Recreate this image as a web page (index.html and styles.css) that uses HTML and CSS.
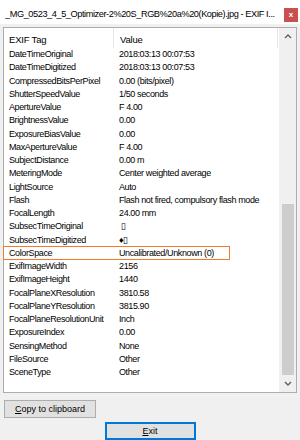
FILE: index.html
```html
<!DOCTYPE html>
<html lang="en">
<head>
    <meta charset="UTF-8">
    <title>EXIF Info</title>
    <link rel="stylesheet" href="styles.css">
</head>
<body>
    <!-- Window title -->
    <div class="titlebar">
        <span class="title">_MG_0523_4_5_Optimizer-2%20S_RGB%20a%20(Kopie).jpg - EXIF I...</span>
        <span class="close">x</span>
    </div>

    <!-- Tag list -->
    <div class="listbox">
        <div class="list">
            <div class="header">
                <div class="col-tag">EXIF Tag</div>
                <div class="col-value">Value</div>
            </div>
            <div class="rows" id="rows"></div>
        </div>
        <div class="scrollbar">
            <div class="arrow">
                <svg width="8" height="5" viewBox="0 0 8 5"><path d="M1 4 L4 1 L7 4" fill="none" stroke="#606060" stroke-width="1.4"/></svg>
            </div>
            <div class="track"></div>
            <div class="thumb"></div>
            <div class="arrow">
                <svg width="8" height="5" viewBox="0 0 8 5"><path d="M1 1 L4 4 L7 1" fill="none" stroke="#606060" stroke-width="1.4"/></svg>
            </div>
        </div>
    </div>

    <!-- Buttons -->
    <div class="buttons">
        <button class="btn btn-copy"><u>C</u>opy to clipboard</button>
        <button class="btn btn-exit"><u>E</u>xit</button>
    </div>

    <script>
        // Список тегов: [имя, значение]
        const tags = [
            ["DateTimeOriginal", "2018:03:13 00:07:53"],
            ["DateTimeDigitized", "2018:03:13 00:07:53"],
            ["CompressedBitsPerPixel", "0.00 (bits/pixel)"],
            ["ShutterSpeedValue", "1/50 seconds"],
            ["ApertureValue", "F 4.00"],
            ["BrightnessValue", "0.00"],
            ["ExposureBiasValue", "0.00"],
            ["MaxApertureValue", "F 4.00"],
            ["SubjectDistance", "0.00 m"],
            ["MeteringMode", "Center weighted average"],
            ["LightSource", "Auto"],
            ["Flash", "Flash not fired, compulsory flash mode"],
            ["FocalLength", "24.00 mm"],
            ["SubsecTimeOriginal", "\u00a0\u25AF"],
            ["SubsecTimeDigitized", "\u2666\u25AF"],
            ["ColorSpace", "Uncalibrated/Unknown (0)"],
            ["ExifImageWidth", "2156"],
            ["ExifImageHeight", "1440"],
            ["FocalPlaneXResolution", "3810.58"],
            ["FocalPlaneYResolution", "3815.90"],
            ["FocalPlaneResolutionUnit", "Inch"],
            ["ExposureIndex", "0.00"],
            ["SensingMethod", "None"],
            ["FileSource", "Other"],
            ["SceneType", "Other"]
        ];

        const rows = document.getElementById('rows');
        tags.forEach(([name, value]) => {
            const row = document.createElement('div');
            row.className = 'row' + (name === 'ColorSpace' ? ' marked' : '');
            row.innerHTML = `<div class="col-tag">${name}</div><div class="col-value">${value}</div>`;
            rows.appendChild(row);
        });
    </script>
</body>
</html>
```

FILE: styles.css
```css
/* Окно */
body {
    margin: 0;
    width: 300px;
    height: 440px;
    background: #f0f0f0;
    font-family: "Liberation Sans", Arial, sans-serif;
    color: #000;
    overflow: hidden;
}

/* Заголовок окна */
.titlebar {
    height: 24px;
    background: #fff;
    display: flex;
    align-items: center;
    padding-left: 5px;
    padding-right: 2px;
}

.title {
    flex: 1;
    min-width: 0;
    font-size: 9.2px;
    letter-spacing: -0.42px;
    white-space: nowrap;
    overflow: hidden;
    padding-top: 3px;
}

.close {
    flex: none;
    width: 14px;
    height: 14px;
    margin-top: 6px;
    margin-left: 4px;
    background: #c9504f;
    color: #fff;
    font-size: 8px;
    line-height: 13px;
    font-weight: bold;
    text-align: center;
}

/* Список */
.listbox {
    margin: 3px 3px 0 3px;
    height: 364px;
    border: 1px solid #adadad;
    background: #fff;
    display: flex;
}

.list {
    flex: 1;
    min-width: 0;
}

.header {
    height: 20px;
    display: flex;
    font-size: 9.5px;
    letter-spacing: -0.2px;
}

.header .col-tag,
.header .col-value {
    display: flex;
    align-items: center;
    border-right: 1px solid #e5e5e5;
    padding-top: 2px;
}

.col-tag {
    width: 104px;
    padding-left: 5px;
}

.col-value {
    flex: 1;
    padding-left: 6px;
}

.header .col-value {
    margin-right: 1px;
}

.row {
    height: 13.26px;
    line-height: 13.26px;
    display: flex;
    font-size: 9px;
    letter-spacing: -0.38px;
    white-space: nowrap;
}

.row .col-tag {
    width: 103px;
    padding-left: 5px;
    margin-right: 1px;
}

/* Оранжевая рамка вокруг ColorSpace */
.row.marked {
    position: relative;
}

.row.marked::after {
    content: "";
    position: absolute;
    left: -1px;
    top: -1px;
    width: 225px;
    height: 12px;
    border: 1.5px solid #f07a2d;
}

/* Полоса прокрутки */
.scrollbar {
    width: 17px;
    background: #f0f0f0;
    display: flex;
    flex-direction: column;
}

.arrow {
    height: 17px;
    display: flex;
    align-items: center;
    justify-content: center;
}

.track {
    height: 159px;
}

.thumb {
    flex: 1;
    margin: 0 2px 0 3px;
    background: #cdcdcd;
}

/* Кнопки */
.buttons {
    display: flex;
    flex-direction: column;
    align-items: center;
}

.btn {
    height: 18px;
    width: 92px;
    background: #e1e1e1;
    border: 1px solid #adadad;
    font-family: "Liberation Sans", Arial, sans-serif;
    font-size: 9px;
    padding: 0;
    color: #000;
}

.btn-copy {
    align-self: flex-start;
    margin: 7px 0 0 4px;
}

.btn-exit {
    width: 91px;
    margin-top: 4px;
    border-color: #0078d7;
    box-shadow: inset 0 0 0 1px #0078d7;
}
```
